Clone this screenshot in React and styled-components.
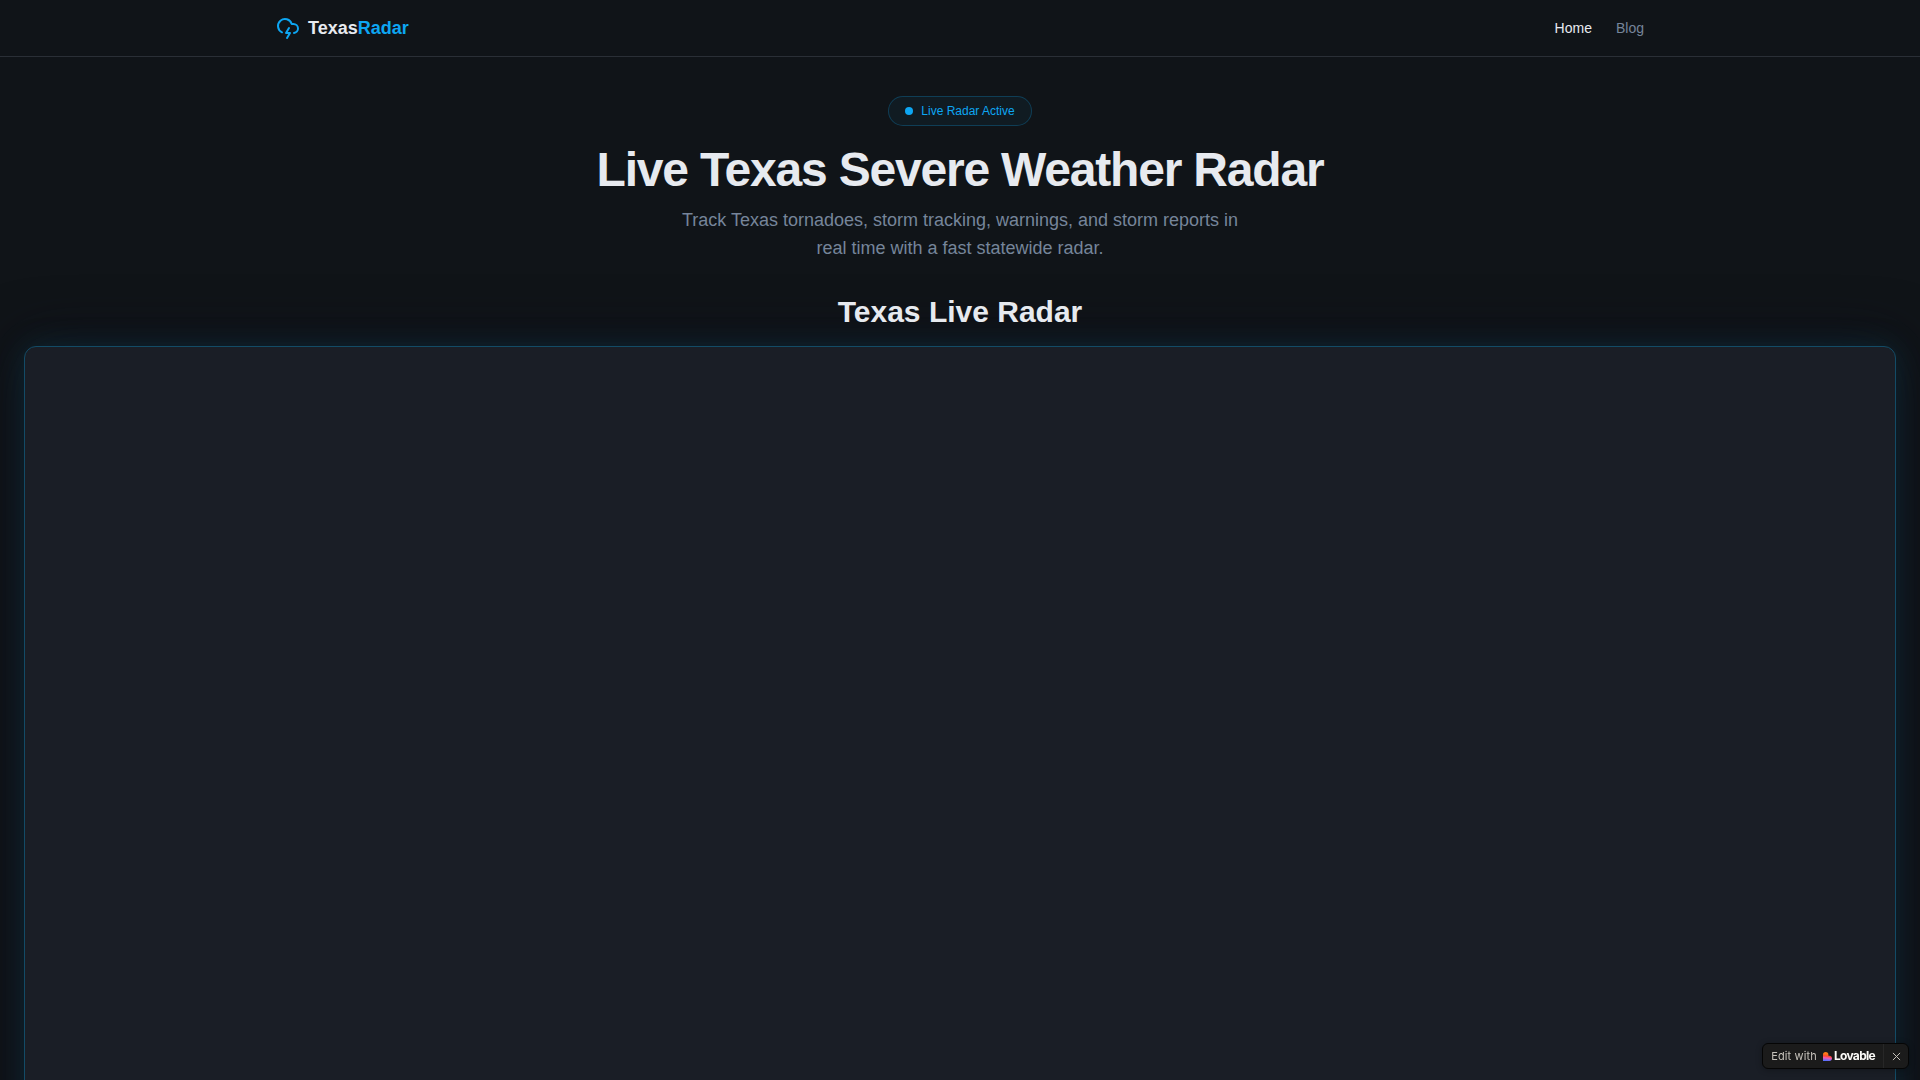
import styled, { createGlobalStyle } from "styled-components";
import { CloudLightning } from "lucide-react";

const links = [
  { label: "Home", active: true },
  { label: "Blog", active: false },
];

const App = () => {
  return (
    <Page>
      <GlobalStyle />
      <Header>
        <Nav>
          <Brand>
            <CloudLightning size={24} />
            <BrandName>
              Texas<span>Radar</span>
            </BrandName>
          </Brand>
          <Links>
            {links.map((link) => (
              <NavLink key={link.label} $active={link.active}>
                {link.label}
              </NavLink>
            ))}
          </Links>
        </Nav>
      </Header>

      <Hero>
        <LiveBadge>
          <Dot />
          Live Radar Active
        </LiveBadge>
        <Title>Live Texas Severe Weather Radar</Title>
        <Subtitle>
          Track Texas tornadoes, storm tracking, warnings, and storm reports in real time with a fast
          statewide radar.
        </Subtitle>
      </Hero>

      <RadarSection>
        <RadarTitle>Texas Live Radar</RadarTitle>
        <RadarFrame />
      </RadarSection>

      <EditBadge>
        <EditLink>
          Edit with
          <LovableLogo />
        </EditLink>
        <CloseButton aria-label="Close">
          <svg width="9" height="9" viewBox="0 0 9 9" fill="none" stroke="currentColor">
            <path d="M1.2 1.2l6.6 6.6M7.8 1.2L1.2 7.8" strokeLinecap="round" />
          </svg>
        </CloseButton>
      </EditBadge>
    </Page>
  );
};

const LovableLogo = () => (
  <Lovable>
    <svg width="9" height="9" viewBox="0 0 18 18">
      <defs>
        <linearGradient id="heart" x1="7" y1="0" x2="5" y2="18" gradientUnits="userSpaceOnUse">
          <stop offset="0.2" stopColor="#ff7a18" />
          <stop offset="0.45" stopColor="#ff4a2e" />
          <stop offset="0.65" stopColor="#f45ab0" />
          <stop offset="0.95" stopColor="#5a70ff" />
        </linearGradient>
      </defs>
      <path
        d="M5.4 0a5.4 5.4 0 0 1 5.4 5.4v2h1.8a5.3 5.3 0 0 1 0 10.6H0V5.4A5.4 5.4 0 0 1 5.4 0z"
        fill="url(#heart)"
      />
    </svg>
    <span>Lovable</span>
  </Lovable>
);

export default App;

const GlobalStyle = createGlobalStyle`
  * {
    box-sizing: border-box;
  }

  body {
    margin: 0;
    background: #101418;
    color: #e7eaef;
    font-family: "Liberation Sans", Arial, sans-serif;
    overflow: hidden;
  }

  h1, h2, p {
    margin: 0;
  }
`;

const Page = styled.div`
  height: 100vh;
  overflow: hidden;
`;

const Header = styled.header`
  border-bottom: 1px solid #2a2f36;
`;

const Nav = styled.nav`
  display: flex;
  align-items: center;
  justify-content: space-between;
  max-width: 1400px;
  height: 56px;
  margin: 0 auto;
  padding: 0 16px;
`;

const Brand = styled.div`
  display: flex;
  align-items: center;
  gap: 8px;
  color: #0da6f2;
`;

const BrandName = styled.span`
  font-size: 18px;
  line-height: 28px;
  font-weight: 700;
  color: #e7eaef;

  span {
    color: #0da6f2;
  }
`;

const Links = styled.div`
  display: flex;
  gap: 24px;
`;

const NavLink = styled.a`
  font-size: 14px;
  line-height: 20px;
  font-weight: 500;
  color: ${(props) => (props.$active ? "#e7eaef" : "#76859a")};
  cursor: pointer;
`;

const Hero = styled.section`
  display: flex;
  flex-direction: column;
  align-items: center;
  padding: 39px 16px 0;
  text-align: center;
`;

const LiveBadge = styled.div`
  display: inline-flex;
  align-items: center;
  gap: 8px;
  padding: 6px 16px;
  border: 1px solid rgba(13, 166, 242, 0.25);
  border-radius: 999px;
  background: #101b22;
  color: #0da6f2;
  font-size: 12px;
  line-height: 16px;
  font-weight: 500;
`;

const Dot = styled.span`
  width: 8px;
  height: 8px;
  border-radius: 50%;
  background: #0da6f2;
`;

const Title = styled.h1`
  margin-top: 20px;
  font-size: 48px;
  line-height: 48px;
  font-weight: 700;
  letter-spacing: -0.025em;
`;

const Subtitle = styled.p`
  max-width: 576px;
  margin-top: 12px;
  font-size: 18px;
  line-height: 28px;
  color: #76859a;
`;

const RadarSection = styled.section`
  padding: 32px 24px 0;
`;

const RadarTitle = styled.h2`
  margin-bottom: 16px;
  font-size: 30px;
  line-height: 36px;
  font-weight: 700;
  text-align: center;
`;

const RadarFrame = styled.div`
  height: 900px;
  border: 1px solid #134b66;
  border-radius: 12px;
  background: #1a1e26;
  box-shadow:
    0 0 28px rgba(14, 100, 120, 0.28),
    0 0 60px rgba(14, 14, 28, 0.8);
`;

// stays over the page in the bottom right corner
const EditBadge = styled.aside`
  position: fixed;
  right: 11px;
  bottom: 11px;
  display: flex;
  align-items: stretch;
  height: 26px;
  border: 1px solid #050505;
  border-radius: 6px;
  background: #1b1b1b;
  font-family: Inter, sans-serif;
  box-shadow: 0 1px 6px rgba(0, 0, 0, 0.3);
`;

const EditLink = styled.a`
  display: flex;
  align-items: center;
  gap: 6px;
  padding: 0 8px;
  font-size: 11px;
  letter-spacing: 0.15px;
  color: #c5c1ba;
`;

const Lovable = styled.span`
  display: flex;
  align-items: center;
  gap: 2px;
  color: #fcfbf8;
  font-size: 12px;
  font-weight: 700;
  letter-spacing: -0.7px;

  span {
    padding-bottom: 1px;
  }
`;

const CloseButton = styled.button`
  display: flex;
  align-items: center;
  justify-content: center;
  width: 25px;
  padding: 0;
  border: 0;
  border-left: 1px solid #272727;
  background: none;
  color: #c5c1ba;
`;
